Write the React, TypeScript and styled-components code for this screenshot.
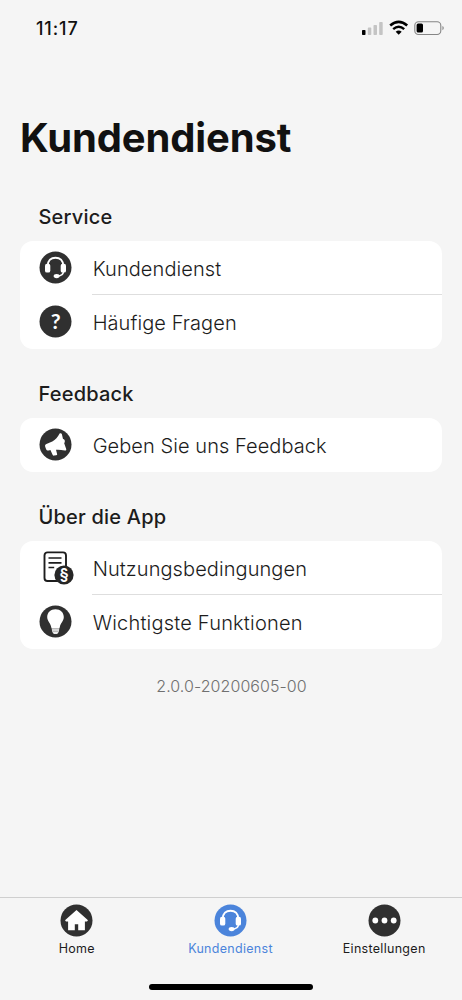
import React from 'react';
import styled, { createGlobalStyle } from 'styled-components';

const GlobalStyle = createGlobalStyle`
  * { box-sizing: border-box; }
  body { margin: 0; background: #f5f5f5; }
`;

const Screen = styled.div`
  display: flex;
  flex-direction: column;
  width: 462px;
  height: 1000px;
  overflow: hidden;
  background: #f5f5f5;
  color: #1c1c1c;
  font-family: Inter, 'Liberation Sans', sans-serif;
`;

const StatusBar = styled.header`
  display: flex;
  align-items: center;
  justify-content: space-between;
  height: 57px;
  padding: 0 17px 0 36px;
`;

const Clock = styled.span`
  font-size: 18px;
  font-weight: 500;
  letter-spacing: 0.9px;
  color: #111;
`;

const StatusIcons = styled.div`
  display: flex;
  align-items: center;
  padding-bottom: 1px;
`;

const Title = styled.h1`
  margin: 57px 0 0 20px;
  font-size: 40px;
  line-height: 48px;
  font-weight: 700;
  letter-spacing: -0.15px;
  color: #111;
`;

const Sections = styled.main`
  flex: 1;
  padding: 39px 20px 0;
`;

const Section = styled.section`
  margin-bottom: 29px;
`;

const SectionTitle = styled.h2`
  margin: 0;
  padding-left: 18.5px;
  height: 40px;
  line-height: 32px;
  font-size: 20px;
  font-weight: 500;
  letter-spacing: 0.2px;
`;

const Card = styled.div`
  border-radius: 13px;
  background: #fff;
  overflow: hidden;
`;

const Row = styled.div`
  display: flex;
  align-items: center;
  height: 54px;
  padding-left: 19px;
`;

const RowIcon = styled.div`
  display: flex;
  width: 53px;
  padding-bottom: 1px;
`;

const RowLabel = styled.div<{ $divided?: boolean; $spacing: number }>`
  flex: 1;
  height: 54px;
  padding-left: 0.7px;
  line-height: 56px;
  font-size: 20px;
  font-weight: 350;
  letter-spacing: ${(p) => p.$spacing}px;
  border-bottom: 1px solid ${(p) => (p.$divided ? '#dedede' : 'transparent')};
`;

const Version = styled.div`
  margin-top: -1px;
  padding-left: 1px;
  line-height: 18px;
  text-align: center;
  font-size: 16px;
  font-weight: 350;
  letter-spacing: 0.06px;
  color: #707070;
`;

const TabBar = styled.nav`
  display: grid;
  grid-template-columns: repeat(3, 1fr);
  height: 87px;
  padding: 6px 1px 0 0;
  border-top: 1px solid #cfcfcf;
`;

const Tab = styled.div<{ $active?: boolean }>`
  display: flex;
  flex-direction: column;
  align-items: center;
  gap: 4px;
  font-size: 12.5px;
  line-height: 16px;
  letter-spacing: 0.3px;
  color: ${(p) => (p.$active ? '#4b84db' : '#1c1c1c')};
`;

const HomeIndicator = styled.div`
  width: 164px;
  height: 6px;
  margin: 0 auto 10px;
  border-radius: 3px;
  background: #000;
`;

const DARK = '#303030';

const Disc = ({ color = DARK, children }: { color?: string; children: React.ReactNode }) => (
  <svg width="33" height="33" viewBox="0 0 33 33">
    <circle cx="16.5" cy="16.5" r="16" fill={color} />
    {children}
  </svg>
);

const Headset = ({ color }: { color?: string }) => (
  <Disc color={color}>
    <path d="M8.7 15C8.700 9.400 12.200 6.700 16.500 6.700S24.300 9.400 24.300 15" fill="none" stroke="#fff" strokeWidth="2" />
    <rect x="6" y="12.800" width="5.300" height="8.800" rx="1.900" fill="#fff" />
    <rect x="21.700" y="12.800" width="5.300" height="8.800" rx="1.900" fill="#fff" />
    <path d="M24.500 20.500C24.300 23.200 22.300 24.800 18.500 25.200" fill="none" stroke="#fff" strokeWidth="1.500" />
    <ellipse cx="17.600" cy="25.100" rx="3" ry="2.100" fill="#fff" />
  </Disc>
);

const Question = () => (
  <Disc>
    <text x="16.600" y="24" textAnchor="middle" fill="#fff" fontFamily="Lato, sans-serif" fontWeight="700" fontSize="21.500">?</text>
  </Disc>
);

const Megaphone = () => (
  <Disc>
    <path
      d="M20.600 5.600C21.400 4.900 22.600 5.200 22.900 6.200L24 11C25.400 11.200 26.100 12.400 25.800 13.800C25.700 14.400 25.500 14.800 25.200 15.200L27.200 20.900C27.500 22 26.900 22.600 25.800 22.400C22.500 21.700 19.600 21.500 17 21.700L18.100 25.900C18.300 26.600 18 27 17.300 27.200L15.200 27.600C14.500 27.800 14 27.600 13.700 26.900L11.400 22L9.700 22.400C8.500 22.700 7.600 22.300 7.100 21.200L6.200 18.700C5.800 17.500 6.200 16.600 7.400 16.100L13.300 13.500C16.400 12 18.800 9 20.600 5.600Z"
      fill="#fff"
    />
  </Disc>
);

const Terms = () => (
  <svg width="35" height="35" viewBox="0 0 35 35">
    <rect x="5.500" y="2.400" width="21.500" height="28.600" rx="3" fill="#fff" stroke="#1d1d1d" strokeWidth="1.900" />
    <path d="M9.500 8H22.500M9.500 12.800H22.500M9.500 17.500H15.200" stroke="#1d1d1d" strokeWidth="1.700" />
    <circle cx="25" cy="25" r="9.600" fill="#262626" />
    <text x="25" y="29.700" textAnchor="middle" fill="#fff" fontFamily="Inter, sans-serif" fontWeight="600" fontSize="16">§</text>
  </svg>
);

const Bulb = () => (
  <Disc>
    <path
      d="M16.500 4.300c-4.900 0-8.300 3.300-8.300 7.800 0 4.400 3.500 6.100 4 10.200.1.600.4.900 1 .9h6.600c.6 0 .9-.3 1-.9.5-4.100 4-5.800 4-10.200 0-4.500-3.400-7.800-8.300-7.800z"
      fill="#fff"
    />
    <path d="M12.700 23h7.600l-.4 3.700-1.700 2.200h-3.400l-1.700-2.200z" fill="#ececec" />
    <path d="M12.800 23.800h7.400M13.200 26.200h6.600" stroke="#888" strokeWidth=".7" />
  </Disc>
);

const House = () => (
  <Disc>
    <path d="M16.500 6L28 16.300l-1 1.100h-2.100V26.300h-6.700v-6h-3.400v6H8.100v-8.900H6l-1-1.100z" fill="#fff" />
  </Disc>
);

const Dots = () => (
  <Disc>
    {[7.300, 16.500, 25.700].map((x) => (
      <circle key={x} cx={x} cy="16.500" r="2.900" fill="#fff" />
    ))}
  </Disc>
);

const StatusGlyphs = () => (
  <svg width="84" height="16" viewBox="0 0 84 16">
    <rect x="1" y="10" width="3.500" height="5" rx=".8" fill="#000" />
    <rect x="6.800" y="7.600" width="3.500" height="7.400" rx=".8" fill="#c4c4c4" />
    <rect x="12.500" y="5" width="3.500" height="10" rx=".8" fill="#c4c4c4" />
    <rect x="18.200" y="2" width="3.500" height="13" rx=".8" fill="#c4c4c4" />
    <path d="M29.200 5.600Q37.700-1.800 46.200 5.600" fill="none" stroke="#000" strokeWidth="2.600" />
    <path d="M32.200 9.100Q37.700 4.500 43.200 9.100" fill="none" stroke="#000" strokeWidth="2.500" />
    <path d="M34.700 11.700Q37.700 9.400 40.700 11.700L37.700 14.800Z" fill="#000" />
    <rect x="53.800" y="1.700" width="26" height="12.800" rx="3.700" fill="none" stroke="#858585" strokeWidth="1.100" />
    <rect x="55.600" y="3.600" width="6.400" height="9" rx="1.500" fill="#000" />
    <path d="M81.500 6v4.200c1.600-.6 1.600-3.600 0-4.200z" fill="#777" />
  </svg>
);

interface Item {
  label: string;
  icon: React.ReactNode;
  spacing: number;
}

const groups: { title: string; items: Item[] }[] = [
  {
    title: 'Service',
    items: [
      { label: 'Kundendienst', icon: <Headset />, spacing: 0.08 },
      { label: 'Häufige Fragen', icon: <Question />, spacing: 0.07 },
    ],
  },
  { title: 'Feedback', items: [{ label: 'Geben Sie uns Feedback', icon: <Megaphone />, spacing: 0.06 }] },
  {
    title: 'Über die App',
    items: [
      { label: 'Nutzungsbedingungen', icon: <Terms />, spacing: 0.08 },
      { label: 'Wichtigste Funktionen', icon: <Bulb />, spacing: 0.2 },
    ],
  },
];

export default function App() {
  return (
    <Screen>
      <GlobalStyle />
      <StatusBar>
        <Clock>11:17</Clock>
        <StatusIcons>
          <StatusGlyphs />
        </StatusIcons>
      </StatusBar>
      <Title>Kundendienst</Title>
      <Sections>
        {groups.map((group) => (
          <Section key={group.title}>
            <SectionTitle>{group.title}</SectionTitle>
            <Card>
              {group.items.map((item, i) => (
                <Row key={item.label}>
                  <RowIcon>{item.icon}</RowIcon>
                  <RowLabel $divided={i < group.items.length - 1} $spacing={item.spacing}>
                    {item.label}
                  </RowLabel>
                </Row>
              ))}
            </Card>
          </Section>
        ))}
        <Version>2.0.0-20200605-00</Version>
      </Sections>
      <TabBar>
        <Tab>
          <House />
          Home
        </Tab>
        <Tab $active>
          <Headset color="#4b84db" />
          Kundendienst
        </Tab>
        <Tab>
          <Dots />
          Einstellungen
        </Tab>
      </TabBar>
      <HomeIndicator />
    </Screen>
  );
}
